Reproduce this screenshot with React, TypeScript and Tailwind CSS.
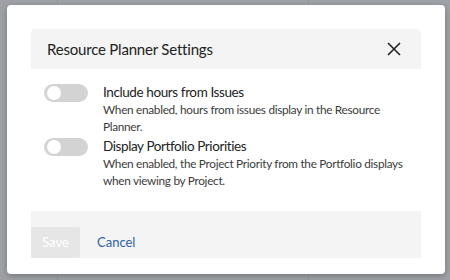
import React from 'react';

const Toggle: React.FC = () => (
  <div className="relative h-[18px] w-[44px] shrink-0 rounded-full bg-[#d3d3d3]">
    <div className="absolute left-[3px] top-[2px] h-[14px] w-[14px] rounded-full bg-white" />
  </div>
);

const settings = [
  {
    title: 'Include hours from Issues',
    text: 'When enabled, hours from issues display in the Resource Planner.',
  },
  {
    title: 'Display Portfolio Priorities',
    text: 'When enabled, the Project Priority from the Portfolio displays when viewing by Project.',
  },
];

export default function App() {
  return (
    <div
      className="relative h-[280px] w-[450px] overflow-hidden bg-[#9ea1a5] pl-[7px] pt-[5px]"
      style={{ fontFamily: 'Lato, "Noto Sans", sans-serif' }}
    >
      {/* faint grid behind the overlay */}
      <div className="absolute left-[57px] top-0 h-full w-px bg-[#959899]" />
      <div className="absolute left-[308px] top-0 h-full w-px bg-[#959899]" />

      <div className="relative h-[269px] w-[438px] rounded-[4px] bg-white px-6 pt-6 shadow-[0_2px_6px_rgba(0,0,0,0.25)]">
        <div className="flex h-[40px] items-center justify-between rounded-t-[4px] bg-[#f4f4f4] pl-4 pr-[20px]">
          <span className="text-[15px] tracking-[-0.2px] text-[#222]">Resource Planner Settings</span>
          <svg width="14" height="14" viewBox="0 0 14 14" fill="none" stroke="#222" strokeWidth="1.6">
            <path d="M1 1 L13 13 M13 1 L1 13" />
          </svg>
        </div>

        <div className="flex h-[142px] flex-col gap-[2px] pl-[13px] pt-[14px]">
          {settings.map((s) => (
            <div key={s.title} className="flex gap-[15px]">
              <div className="pt-[1px]">
                <Toggle />
              </div>
              <div className="w-[300px]">
                <div className="text-[13.5px] leading-[18px] tracking-[-0.4px] text-[#222]">{s.title}</div>
                <div className="text-[11.8px] leading-[17px] tracking-[-0.3px] text-[#3c3c3c]">{s.text}</div>
              </div>
            </div>
          ))}
        </div>

        <div className="flex h-[47px] items-end bg-[#f4f4f4]">
          <button className="h-[31px] w-[49px] rounded-[2px] bg-[#e6e6e6] text-[13px] text-white">
            Save
          </button>
          <button className="ml-[17px] h-[31px] text-[13px] text-[#2d5fa8]">Cancel</button>
        </div>
      </div>
    </div>
  );
}
